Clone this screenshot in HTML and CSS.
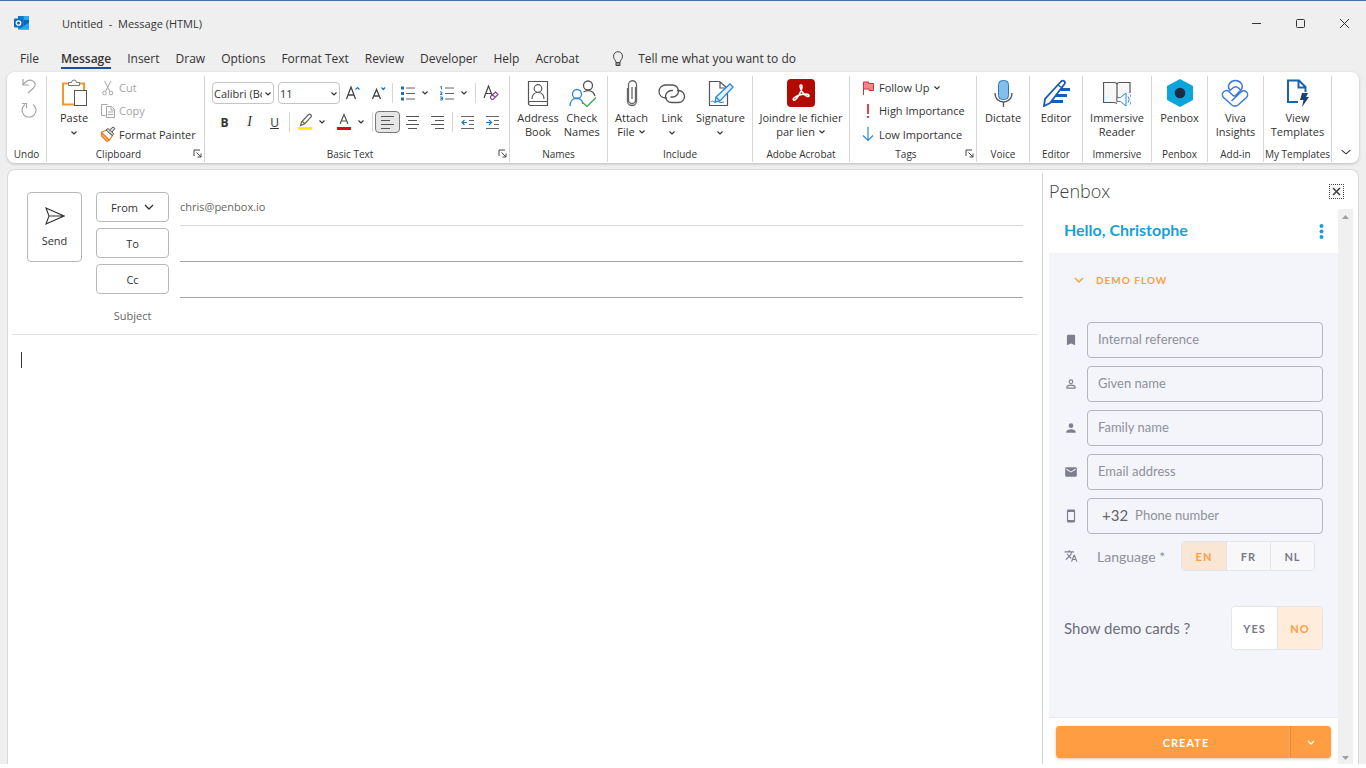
FILE: index.html
```html
<!DOCTYPE html>
<html lang="en">
<head>
    <meta charset="UTF-8">
    <meta name="viewport" content="width=device-width, initial-scale=1.0">
    <title>Untitled - Message (HTML)</title>
    <link rel="stylesheet" href="styles.css">
</head>
<body>
    <svg class="sprite" aria-hidden="true">
        <symbol id="chev" viewBox="0 0 8 8"><path d="M1.5 2.5 4 5l2.5-2.5" fill="none" stroke="currentColor" stroke-width="1.2"/></symbol>
        <symbol id="launcher" viewBox="0 0 9 9"><path d="M1 7V1h6M3.500 3.500 8 8M8 4.500V8H4.500" fill="none" stroke="#444"/></symbol>
    </svg>

    <div class="window">
        <header class="titlebar">
            <svg class="logo" width="16" height="16" viewBox="0 0 16 16">
                <path d="M4 1h11v13.500H4z" fill="#1490df"/>
                <path d="M9.500 1H15v4H9.500z" fill="#32a9e8"/>
                <path d="M4 1h5.500v4H4z" fill="#0f78d4"/>
                <path d="M9.500 5H15v4l-5.500 3z" fill="#1066b5"/>
                <path d="M15 7.500v7H5z" fill="#28a8ea"/>
                <rect x="0" y="3.500" width="9" height="9" rx="1" fill="#0f6cbd"/>
                <circle cx="4.500" cy="8" r="2.200" fill="none" stroke="#fff" stroke-width="1.300"/>
            </svg>
            <span class="window-title">Untitled&nbsp; -&nbsp; Message (HTML)</span>
            <div class="window-buttons">
                <button aria-label="Minimize"><svg width="11" height="11"><path d="M1 5.500h9" stroke="#333"/></svg></button>
                <button aria-label="Maximize"><svg width="11" height="11"><rect x="1.500" y="1.500" width="8" height="8" rx="1" fill="none" stroke="#333"/></svg></button>
                <button aria-label="Close"><svg width="11" height="11"><path d="m1 1 9 9M10 1l-9 9" stroke="#333"/></svg></button>
            </div>
        </header>

        <nav class="tabs">
            <a href="#" class="file">File</a>
            <a href="#" class="active">Message</a>
            <a href="#">Insert</a>
            <a href="#">Draw</a>
            <a href="#">Options</a>
            <a href="#">Format Text</a>
            <a href="#">Review</a>
            <a href="#">Developer</a>
            <a href="#">Help</a>
            <a href="#">Acrobat</a>
            <a href="#" class="tell">
                <svg width="12" height="16" viewBox="0 0 12 16" fill="none" stroke="#444"><path d="M4 11.500C4 9 1.500 8.500 1.500 5.200a4.500 4.500 0 0 1 9 0C10.500 8.500 8 9 8 11.500zM4 11.500v3h4v-3M4 13h4"/></svg>
                Tell me what you want to do
            </a>
        </nav>

        <section class="ribbon">
            <div class="group">
                <div class="group-body undo">
                    <button aria-label="Undo"><svg width="16" height="16" viewBox="0 0 16 16" fill="none" stroke="#a6a6a6" stroke-width="1.200"><path d="M2 1v6h6M2 7C5 3 8 1.500 11 2.500c4 1.500 4 5 1.500 7.500L7 15"/></svg></button>
                    <button aria-label="Redo"><svg width="16" height="16" viewBox="0 0 16 16" fill="none" stroke="#a6a6a6" stroke-width="1.200"><path d="M4 2.500a7 7 0 1 0 8 0M1 1.500h4.500V6"/></svg></button>
                </div>
                <div class="group-label">Undo</div>
            </div>

            <div class="group with-launcher">
                <div class="group-body clipboard">
                    <button class="big">
                        <svg width="28" height="28" viewBox="0 0 28 28" fill="none">
                            <path d="M8 4.500H3v21h11M20 4.500h4V11" stroke="#f09a2e" stroke-width="2"/>
                            <path d="M8.500 6.500v-3h3a2.500 2.500 0 0 1 5 0h3v3z" fill="#fff" stroke="#777"/>
                            <rect x="14.500" y="11.500" width="12" height="15" fill="#fff" stroke="#555"/>
                        </svg>
                        Paste
                        <svg class="chev"><use href="#chev"/></svg>
                    </button>
                    <div class="stack">
                        <button class="small off"><svg width="16" height="16" viewBox="0 0 16 16" fill="none" stroke="#a6a6a6"><path d="M4.500 1 10 11.500M11 1 5.500 11.500"/><circle cx="4.500" cy="13" r="1.800"/><circle cx="11" cy="13" r="1.800"/></svg>Cut</button>
                        <button class="small off"><svg width="16" height="16" viewBox="0 0 16 16" fill="#fff" stroke="#a6a6a6"><path d="M5.500 12.500h-4v-11h6"/><path d="M6.500 3.500h5l3 3v8h-8zM11 4v3h3.500M8 9h5M8 11.500h5"/></svg>Copy</button>
                        <button class="small"><svg width="16" height="16" viewBox="0 0 16 16"><path d="m1.500 6.500 8 7.500-2.500 1.500L1.500 10z" fill="#f7b679" stroke="#e8812a" stroke-width="1.200"/><path d="m1.500 6.500 5-2.500 6 5.500-3 4.500z" fill="#fff" stroke="#e8812a" stroke-width="1.200"/><path d="m6 4 2-1.500 5.500 5-1 2zM9.500 4 13 1l2 1.500-3 3.500" fill="#ddd" stroke="#555"/></svg>Format Painter</button>
                    </div>
                </div>
                <div class="group-label">Clipboard</div>
                <button class="launcher" aria-label="Clipboard settings"><svg width="9" height="9"><use href="#launcher"/></svg></button>
            </div>

            <div class="group with-launcher">
                <div class="group-body text-tools">
                    <div class="tool-row">
                        <div class="combo">
                            <select aria-label="Font"><option>Calibri (Body)</option></select>
                            <svg class="chev"><use href="#chev"/></svg>
                        </div>
                        <div class="combo">
                            <select aria-label="Font size"><option>11</option></select>
                            <svg class="chev"><use href="#chev"/></svg>
                        </div>
                        <button class="tool" aria-label="Grow font"><svg width="16" height="16" viewBox="0 0 16 16" fill="none" stroke="#444"><path d="M1.500 14 6 2l4.500 12M3 10h6" stroke-width="1.300"/><path d="m10.500 4.500 2-2 2 2" stroke="#1a78c2" stroke-width="1.200"/></svg></button>
                        <button class="tool" aria-label="Shrink font"><svg width="16" height="16" viewBox="0 0 16 16" fill="none" stroke="#444"><path d="M2.500 14 6.500 4.500l4 9.500M4 11h5" stroke-width="1.300"/><path d="m11.500 2.500 1.800 2 1.800-2" stroke="#1a78c2" stroke-width="1.200"/></svg></button>
                        <i class="sep"></i>
                        <button class="tool" aria-label="Bullets"><svg width="16" height="16" viewBox="0 0 16 16"><path d="M6 3h9M6 8.500h9M6 14h9" stroke="#666"/><path d="M1 1.500h3v3H1zM1 7h3v3H1zM1 12.500h3v3H1z" fill="#1a6fc0"/></svg></button>
                        <button class="drop" aria-label="Bullet styles"><svg class="chev"><use href="#chev"/></svg></button>
                        <button class="tool" aria-label="Numbering"><svg width="16" height="16" viewBox="0 0 16 16" fill="none"><path d="M6 3h9M6 8.500h9M6 14h9" stroke="#666"/><path d="M1 2l1.500-.5v3M1 7h2v1.200L1 9.500h2.500M1 12h2.500v3H1M1.500 13.500h2" stroke="#1a6fc0" stroke-width=".9"/></svg></button>
                        <button class="drop" aria-label="Numbering styles"><svg class="chev"><use href="#chev"/></svg></button>
                        <i class="sep"></i>
                        <button class="tool" aria-label="Clear formatting"><svg width="16" height="16" viewBox="0 0 16 16" fill="none"><path d="m1 13 4.500-12 3.500 9M3 8.500h5" stroke="#444" stroke-width="1.200"/><path d="m7.500 11.500 5-4.500 2.500 2.500-5 5H9l-1.500-1.500zM9.500 9.700l2.800 2.800" stroke="#8a3fa8" stroke-width="1.200"/></svg></button>
                    </div>
                    <div class="tool-row second">
                        <button class="tool"><b>B</b></button>
                        <button class="tool"><em>I</em></button>
                        <button class="tool"><u>U</u></button>
                        <i class="sep"></i>
                        <button class="tool" aria-label="Highlight"><svg width="16" height="18" viewBox="0 0 16 18"><path d="m4.500 9 7-7.500a1.800 1.800 0 0 1 2.500 2.500L7.500 11l-4 1.500zM5 8l3 3" fill="none" stroke="#666" stroke-width="1.200"/><path d="M1 14h14v3H1z" fill="#ffef00"/></svg></button>
                        <button class="drop" aria-label="Highlight colours"><svg class="chev"><use href="#chev"/></svg></button>
                        <button class="tool" aria-label="Font colour"><svg width="16" height="18" viewBox="0 0 16 18"><path d="m4 11 4-9.500L12 11M5.500 8h5" fill="none" stroke="#555" stroke-width="1.200"/><path d="M1 14h14v3H1z" fill="#e00b0b"/></svg></button>
                        <button class="drop" aria-label="Font colours"><svg class="chev"><use href="#chev"/></svg></button>
                        <i class="sep"></i>
                        <button class="tool pressed" aria-label="Align left"><svg width="14" height="14"><path d="M0 1.500h13M0 5.500h9M0 9.500h13M0 13.500h9" stroke="#555"/></svg></button>
                        <button class="tool" aria-label="Align centre"><svg width="14" height="14"><path d="M0 1.500h13M2 5.500h9M0 9.500h13M2 13.500h9" stroke="#555"/></svg></button>
                        <button class="tool" aria-label="Align right"><svg width="14" height="14"><path d="M0 1.500h13M4 5.500h9M0 9.500h13M4 13.500h9" stroke="#555"/></svg></button>
                        <i class="sep"></i>
                        <button class="tool" aria-label="Decrease indent"><svg width="14" height="14" fill="none"><path d="M0 1.500h13M8 5.500h5M8 9.500h5M0 13.500h13" stroke="#666"/><path d="M6 7.500H1M3.500 5 1 7.500 3.500 10" stroke="#1a78c2" stroke-width="1.200"/></svg></button>
                        <button class="tool" aria-label="Increase indent"><svg width="14" height="14" fill="none"><path d="M0 1.500h13M8 5.500h5M8 9.500h5M0 13.500h13" stroke="#666"/><path d="M0 7.500h5.500M3 5l2.500 2.500L3 10" stroke="#1a78c2" stroke-width="1.200"/></svg></button>
                    </div>
                </div>
                <div class="group-label">Basic Text</div>
                <button class="launcher" aria-label="Text settings"><svg width="9" height="9"><use href="#launcher"/></svg></button>
            </div>

            <div class="group">
                <div class="group-body">
                    <button class="big">
                        <svg width="28" height="28" viewBox="0 0 28 28" fill="none" stroke="#555" stroke-width="1.200"><path d="M4.500 2.500h19v24h-17a2 2 0 0 1-2-2zM4.500 24.500a2 2 0 0 1 2-2h17"/><circle cx="14" cy="9.500" r="3.800"/><path d="M8 20c0-4 2.500-6.500 6-6.500s6 2.500 6 6.500"/></svg>
                        Address<br>Book
                    </button>
                    <button class="big">
                        <svg width="28" height="28" viewBox="0 0 28 28" fill="none" stroke-width="1.300"><g stroke="#555"><circle cx="20" cy="6.500" r="4.500"/><path d="M15.500 13c5-3 10-1 11.500 4"/></g><g stroke="#2b88d8"><circle cx="9" cy="15" r="4.500"/><path d="M2 27c0-10 12-10 13-2"/></g><path d="m14 23 5 4.500 9-9" stroke="#3aa655"/></svg>
                        Check<br>Names
                    </button>
                </div>
                <div class="group-label">Names</div>
            </div>

            <div class="group">
                <div class="group-body include">
                    <button class="big">
                        <svg width="28" height="28" viewBox="0 0 28 28" fill="none" stroke="#666" stroke-width="1.300"><path d="M17.500 8v13a3.500 3.500 0 0 1-7 0V6a4 4 0 0 1 8-.5V22a4.500 4.500 0 0 1-9 0V9M14 8v12"/></svg>
                        Attach<span>File <svg class="chev"><use href="#chev"/></svg></span>
                    </button>
                    <button class="big">
                        <svg width="28" height="28" viewBox="0 0 28 28" fill="none" stroke="#555" stroke-width="1.300"><path d="M9 19H7.500A5.500 5.500 0 0 1 7.500 6h7a6 6 0 0 1 0 12h-2"/><path d="M19 11.500h1.500a5.500 5.500 0 0 1 0 12h-7a6 6 0 0 1 0-12H15"/></svg>
                        Link<svg class="chev"><use href="#chev"/></svg>
                    </button>
                    <button class="big">
                        <svg width="28" height="28" viewBox="0 0 28 28" fill="none"><path d="M13.500 2.500h-10v24h18V14M13.500 2.500l7 6M14 2.500V9h6" stroke="#555" stroke-width="1.200"/><path d="m10 18 14-13 3 3-13 14-5 1zM10 18l4 4" fill="#e1f1fc" stroke="#2b88d8" stroke-width="1.300"/><path d="M5 23c2-3 3 2 5 0s3 2 8 0" stroke="#2b88d8"/></svg>
                        Signature<svg class="chev"><use href="#chev"/></svg>
                    </button>
                </div>
                <div class="group-label">Include</div>
            </div>

            <div class="group">
                <div class="group-body">
                    <button class="big">
                        <svg width="28" height="28" viewBox="0 0 28 28"><rect width="28" height="28" rx="4" fill="#b30b00"/><path d="M13.500 6c2.500-.5 1.500 4-.5 8-2 4.500-5 8-6.500 7-1.500-1.500 3-4.500 8-5.500s8 0 7.500 1.500c-.8 1.500-4-.5-6-3-2.500-3-3.500-7.500-2.500-8z" fill="none" stroke="#fff" stroke-width="1.600"/></svg>
                        Joindre le fichier<span>par lien <svg class="chev"><use href="#chev"/></svg></span>
                    </button>
                </div>
                <div class="group-label">Adobe Acrobat</div>
            </div>

            <div class="group with-launcher">
                <div class="group-body tags">
                    <div class="stack">
                        <button class="small"><svg width="16" height="16" viewBox="0 0 16 16"><path d="M3.500 15V2h5v1.500h5v7H9V9H4" fill="#f4858e" stroke="#d13438"/></svg>Follow Up <svg class="chev"><use href="#chev"/></svg></button>
                        <button class="small"><svg width="16" height="16" viewBox="0 0 16 16"><path d="M8 1v10M8 13v2" stroke="#e81123" stroke-width="1.600"/></svg>High Importance</button>
                        <button class="small"><svg width="16" height="16" viewBox="0 0 16 16"><path d="M8 1v13M3 9.500l5 5 5-5" fill="none" stroke="#2b88d8" stroke-width="1.200"/></svg>Low Importance</button>
                    </div>
                </div>
                <div class="group-label">Tags</div>
                <button class="launcher" aria-label="Tag settings"><svg width="9" height="9"><use href="#launcher"/></svg></button>
            </div>

            <div class="group">
                <div class="group-body">
                    <button class="big">
                        <svg width="28" height="28" viewBox="0 0 28 28" fill="none"><rect x="9.500" y="1.500" width="10" height="19" rx="4" fill="#83beec" stroke="#2b78c2"/><path d="M6 14c0 12 17 12 17 0M14.500 23v5" stroke="#555" stroke-width="1.300"/></svg>
                        Dictate
                    </button>
                </div>
                <div class="group-label">Voice</div>
            </div>

            <div class="group">
                <div class="group-body">
                    <button class="big">
                        <svg width="28" height="28" viewBox="0 0 28 28" fill="none"><path d="M14 10.500h14M11 16.500h14M9 22.500h12" stroke="#185abd" stroke-width="3.200"/><path d="M19 2.500c2-2 5 0 3.500 2.500L8 24l-6 3 1-7z" fill="#fff" stroke="#185abd" stroke-width="1.800"/><path d="m16 6 4 3" stroke="#185abd" stroke-width="1.500"/></svg>
                        Editor
                    </button>
                </div>
                <div class="group-label">Editor</div>
            </div>

            <div class="group">
                <div class="group-body">
                    <button class="big">
                        <svg width="28" height="28" viewBox="0 0 28 28" fill="none"><path d="M14 24.500c-1-1-2-1-4-1H.5v-20H11c2 0 3 .5 3 2 0-1.500 1-2 3-2h10V14M14 5.500v17" fill="#f7f7f7" stroke="#555" stroke-width="1.200"/><path d="M14 18.500h3.500L23 14v13l-5.500-4.500H14z" fill="#fff" stroke="#2b88d8"/><path d="M25 17.500c1.500 2 1.500 4 0 6M27 15.500c2 3 2 7 0 10" stroke="#2b88d8"/></svg>
                        Immersive<br>Reader
                    </button>
                </div>
                <div class="group-label">Immersive</div>
            </div>

            <div class="group">
                <div class="group-body">
                    <button class="big">
                        <svg width="28" height="28" viewBox="0 0 28 28"><path d="m14 0 13 7v14l-13 7-13-7V7z" fill="#0ba5db"/><circle cx="14" cy="14" r="5.300" fill="#1c2b3f"/></svg>
                        Penbox
                    </button>
                </div>
                <div class="group-label">Penbox</div>
            </div>

            <div class="group">
                <div class="group-body">
                    <button class="big">
                        <svg width="28" height="28" viewBox="0 0 28 28" fill="none" stroke="#3b78e7" stroke-width="1.500"><path d="M9 11.500C5 6 10 1.500 14.500 1.500S23.500 6 20 11l-5.500 5.500c-1 1-2 .5-3-.5l-3.500-3.500c-2-1.500-4-1-5.500.500s-1.500 4 0 5.500l8.500 7.500c2 1.500 4 1.500 6 0l8.500-7.500c1.500-1.500 1.500-4 0-5.500s-3.500-1.500-5.500 0L10.500 22M9 11.500l3.500-3c1.500-1 3.500-1 5 .5l2.500 2.500"/></svg>
                        Viva<br>Insights
                    </button>
                </div>
                <div class="group-label">Add-in</div>
            </div>

            <div class="group">
                <div class="group-body">
                    <button class="big">
                        <svg width="28" height="28" viewBox="0 0 28 28" fill="none"><path d="M15 23H5V1.500h11l6.500 6.500v5M15.500 2v6.500H22" stroke="#1664b0" stroke-width="2"/><path d="m19 14h6l-2 4h3l-7 10 1.500-7H17z" fill="#1b3f7a"/></svg>
                        View<br>Templates
                    </button>
                </div>
                <div class="group-label">My Templates</div>
            </div>

            <button class="collapse" aria-label="Collapse ribbon"><svg width="10" height="10" viewBox="0 0 8 8"><path d="m.5 2.500 3.500 3 3.500-3" fill="none" stroke="#333" stroke-width=".9"/></svg></button>
        </section>

        <main class="workspace">
            <section class="mail">
                <form class="envelope">
                    <button type="button" class="send">
                        <svg width="20" height="18" viewBox="0 0 20 18" fill="none" stroke="#333" stroke-width="1.100"><path d="M1 1l18 8L1 17l3-8zM4 9h15"/></svg>
                        Send
                    </button>
                    <div class="fields">
                        <div class="row from">
                            <button type="button">From <svg width="10" height="10"><path d="m1 3 4 4 4-4" fill="none" stroke="#333" stroke-width="1.300"/></svg></button>
                            <input type="text" value="chris@penbox.io" aria-label="From">
                        </div>
                        <div class="row">
                            <button type="button">To</button>
                            <input type="text" aria-label="To">
                        </div>
                        <div class="row">
                            <button type="button">Cc</button>
                            <input type="text" aria-label="Cc">
                        </div>
                        <div class="row subject">
                            <label for="subject">Subject</label>
                            <input type="text" id="subject">
                        </div>
                    </div>
                </form>
                <div class="message" contenteditable="true" aria-label="Message body"><span class="caret"></span></div>
            </section>

            <aside class="pane">
                <div class="pane-head">
                    <h2>Penbox</h2>
                    <button aria-label="Close pane"><svg width="9" height="9"><path d="m1 1 7 7M8 1 1 8" stroke="#444" stroke-width="1.600"/></svg></button>
                </div>
                <div class="pane-frame">
                    <div class="addin">
                        <div class="hello">
                            <h1>Hello, Christophe</h1>
                            <button aria-label="Menu"><svg width="5" height="15" fill="#1a9fd6"><circle cx="2.500" cy="2" r="2"/><circle cx="2.500" cy="7.500" r="2"/><circle cx="2.500" cy="13" r="2"/></svg></button>
                        </div>
                        <div class="flow">
                            <button class="flow-title"><svg width="10" height="8"><path d="m1 2 4 4 4-4" fill="none" stroke="#ff9d42" stroke-width="1.500"/></svg>DEMO FLOW</button>
                            <div class="field">
                                <svg viewBox="0 0 24 24"><path d="M17 3H7a2 2 0 0 0-2 2v16l7-3 7 3V5a2 2 0 0 0-2-2z"/></svg>
                                <input type="text" placeholder="Internal reference" aria-label="Internal reference">
                            </div>
                            <div class="field">
                                <svg viewBox="0 0 24 24"><path d="M12 13c-2.670 0-8 1.340-8 4v3h16v-3c0-2.660-5.330-4-8-4m0-9a4 4 0 1 0 0 8 4 4 0 0 0 0-8m0 10.900c2.970 0 6.100 1.460 6.100 2.100v1.100H5.900V17c0-.64 3.130-2.100 6.100-2.100m0-9a2.100 2.100 0 1 1 0 4.200 2.100 2.100 0 0 1 0-4.200"/></svg>
                                <input type="text" placeholder="Given name" aria-label="Given name">
                            </div>
                            <div class="field">
                                <svg viewBox="0 0 24 24"><path d="M12 4a4 4 0 1 1 0 8 4 4 0 0 1 0-8m0 10c4.420 0 8 1.790 8 4v2H4v-2c0-2.210 3.580-4 8-4"/></svg>
                                <input type="text" placeholder="Family name" aria-label="Family name">
                            </div>
                            <div class="field">
                                <svg viewBox="0 0 24 24"><path d="m20 8-8 5-8-5V6l8 5 8-5m0-2H4a2 2 0 0 0-2 2v12a2 2 0 0 0 2 2h16a2 2 0 0 0 2-2V6a2 2 0 0 0-2-2"/></svg>
                                <input type="text" placeholder="Email address" aria-label="Email address">
                            </div>
                            <div class="field">
                                <svg viewBox="0 0 24 24"><path d="M17 19H7V5h10m0-4H7a2 2 0 0 0-2 2v18a2 2 0 0 0 2 2h10a2 2 0 0 0 2-2V3a2 2 0 0 0-2-2"/></svg>
                                <div class="phone"><span>+32</span><input type="tel" placeholder="Phone number" aria-label="Phone number"></div>
                            </div>
                            <div class="field language">
                                <svg viewBox="0 0 24 24"><path d="m12.870 15.070-2.540-2.510.03-.03A17.500 17.500 0 0 0 14.070 6H17V4h-7V2H8v2H1v2h11.170C11.500 7.920 10.440 9.750 9 11.350 8.070 10.320 7.300 9.190 6.690 8h-2c.73 1.630 1.730 3.170 2.980 4.560l-5.090 5.020L4 19l5-5 3.110 3.110zM18.500 10h-2L12 22h2l1.120-3h4.750L21 22h2zm-2.620 7 1.620-4.330L19.120 17z"/></svg>
                                <span>Language *</span>
                                <div class="toggle">
                                    <button class="on" aria-pressed="true">EN</button>
                                    <button>FR</button>
                                    <button>NL</button>
                                </div>
                            </div>
                            <div class="cards">
                                <span>Show demo cards ?</span>
                                <div class="toggle large">
                                    <button>YES</button>
                                    <button class="on" aria-pressed="true">NO</button>
                                </div>
                            </div>
                        </div>
                        <div class="actions">
                            <button class="create">CREATE</button>
                            <button class="more" aria-label="More actions"><svg width="8" height="8"><path d="m1 2 3 3 3-3" fill="none" stroke="#fff" stroke-width="1.300"/></svg></button>
                        </div>
                    </div>
                    <div class="scrollbar" aria-hidden="true">
                        <svg width="7" height="4"><path d="M0 4h7L3.500 0z" fill="#a0a0a0"/></svg>
                        <svg width="7" height="4"><path d="M0 0h7L3.500 4z" fill="#a0a0a0"/></svg>
                    </div>
                </div>
            </aside>
        </main>
    </div>
</body>
</html>
```
FILE: styles.css
```css
* {
    box-sizing: border-box;
}
body {
    margin: 0;
    font-family: "Open Sans", "Noto Sans", sans-serif;
    font-size: 11px;
    color: #333;
    background: #fff;
}
button, input, select {
    font: inherit;
    color: inherit;
    border: none;
    background: none;
    padding: 0;
    margin: 0;
}
button {
    cursor: pointer;
}
svg {
    flex: none;
}
.sprite {
    position: absolute;
    width: 0;
    height: 0;
}
.chev {
    width: 8px;
    height: 8px;
}

.window {
    display: flex;
    flex-direction: column;
    min-height: 100vh;
    background: #efefef;
    border-top: 1px solid #4a6fa8;
    border-bottom: 4px solid #fff;
}

/* title bar and tabs */
.titlebar {
    display: flex;
    align-items: center;
    height: 44px;
    padding-left: 14px;
}
.window-title {
    margin-left: 32px;
}
.window-buttons {
    display: flex;
    margin-left: auto;
}
.window-buttons button {
    display: grid;
    place-items: center;
    width: 44px;
    height: 32px;
}
.tabs {
    display: flex;
    gap: 16px;
    height: 27px;
    padding-left: 20px;
    font-size: 12px;
    line-height: 28px;
}
.tabs a {
    color: #333;
    text-decoration: none;
    height: 24px;
    white-space: nowrap;
}
.tabs .file {
    margin-right: 6px;
}
.tabs .active {
    font-weight: 600;
    border-bottom: 2px solid #1f4e9e;
}
.tabs .tell {
    display: flex;
    align-items: center;
    gap: 14px;
    height: 28px;
    margin-left: 17px;
}

/* ribbon */
.ribbon {
    display: grid;
    grid-template-columns: 40px 158px 305px 98px 145px 97px 127px 53px 53px 69px 56px 56px 68px 1fr;
    margin: 0 7px;
    height: 91px;
    background: #fff;
    border-radius: 8px;
    box-shadow: 0 1px 3px #bbb;
}
.group {
    position: relative;
    display: flex;
    flex-direction: column;
    margin: 4px 0;
    border-right: 1px solid #d6d6d6;
    white-space: nowrap;
}
.group-body {
    display: flex;
    justify-content: center;
    gap: 5px;
    height: 70px;
}
.group-label {
    font-size: 10px;
    line-height: 16px;
    text-align: center;
}
.with-launcher .group-label {
    padding-right: 14px;
}
.launcher {
    position: absolute;
    right: 2px;
    bottom: 4px;
    height: 9px;
    line-height: 0;
}
.big {
    display: flex;
    flex-direction: column;
    align-items: center;
    line-height: 14px;
    text-align: center;
    padding-top: 3px;
}
.big > svg:first-child {
    margin-bottom: 4px;
}
.big > .chev {
    margin-top: 4px;
}
.undo {
    flex-direction: column;
    align-items: center;
    justify-content: flex-start;
    gap: 8px;
    padding: 2px 0 0 4px;
}
.undo button {
    height: 16px;
}
.clipboard {
    justify-content: flex-start;
    gap: 12px;
    padding-left: 13px;
}
.stack {
    display: flex;
    flex-direction: column;
}
.small {
    display: flex;
    align-items: center;
    gap: 3px;
    height: 24px;
}
.off {
    color: #a6a6a6;
}
.tags {
    justify-content: flex-start;
    padding-left: 10px;
}
.include {
    gap: 10px;
}
.collapse {
    align-self: end;
    justify-self: center;
    padding-bottom: 6px;
}

.text-tools {
    flex-direction: column;
    justify-content: flex-start;
    gap: 5px;
    padding: 5px 0 0 7px;
}
.tool-row {
    display: flex;
    align-items: center;
    height: 24px;
}
.combo {
    position: relative;
    width: 62px;
    margin-right: 4px;
}
.combo + .tool {
    margin-left: -4px;
}
.combo select {
    appearance: none;
    width: 100%;
    height: 22px;
    padding: 0 11px 0 1px;
    border: 1px solid #c4c4c4;
    border-radius: 4px;
    overflow: hidden;
}
.combo .chev {
    position: absolute;
    right: 2px;
    top: 8px;
}
.tool {
    display: grid;
    place-items: center;
    width: 25px;
    height: 22px;
    font-size: 12px;
}
.tool em {
    font-family: "Liberation Serif", serif;
    font-size: 14px;
}
.drop {
    display: grid;
    place-items: center;
    width: 10px;
    height: 22px;
    margin-right: 4px;
}
.pressed {
    background: #e6e6e6;
    border: 1px solid #777;
    border-radius: 4px;
}
.sep {
    width: 1px;
    height: 20px;
    margin: 0 2px;
    background: #d6d6d6;
}

/* message */
.workspace {
    flex: 1;
    display: grid;
    grid-template-columns: 1fr 316px;
    margin: 6px 7px 0;
    background: #fff;
    border: 1px solid #d9d9d9;
    border-bottom: none;
    border-radius: 8px 8px 0 0;
}
.mail {
    display: flex;
    flex-direction: column;
    padding: 20px 4px 0;
}
.envelope {
    display: flex;
    gap: 14px;
    padding: 0 15px;
    border-bottom: 1px solid #e2e2e2;
}
.send, .row button {
    border: 1px solid #b8b8b8;
    border-radius: 4px;
}
.send {
    display: flex;
    flex-direction: column;
    align-items: center;
    justify-content: center;
    gap: 8px;
    width: 55px;
    height: 70px;
    margin-top: 2px;
}
.fields {
    flex: 1;
}
.row {
    display: grid;
    grid-template-columns: 73px 1fr;
    column-gap: 11px;
    height: 36px;
}
.row button, .row label {
    display: flex;
    align-items: center;
    justify-content: center;
    gap: 6px;
    height: 30px;
    margin-top: 2px;
}
.row input {
    height: 36px;
    padding-bottom: 3px;
    border-bottom: 1px solid #a6a6a6;
    outline: none;
}
.row.from input {
    color: #666;
    border-color: #d9d9d9;
}
.row.subject {
    color: #666;
}
.row.subject input {
    border: none;
}
.message {
    flex: 1;
    padding: 17px 9px;
    outline: none;
}
.caret {
    display: block;
    width: 1px;
    height: 16px;
    background: #333;
}

/* add-in pane */
.pane {
    display: flex;
    flex-direction: column;
    margin-top: 3px;
    padding: 0 5px 0 6px;
    border-left: 1px solid #d4d4d4;
}
.pane-head {
    display: flex;
    align-items: center;
    justify-content: space-between;
    height: 36px;
    padding-right: 9px;
}
.pane-head h2 {
    margin: 0;
    font-size: 18px;
    font-weight: 300;
    color: #444;
}
.pane-head button {
    display: grid;
    place-items: center;
    width: 15px;
    height: 15px;
    border: 1px dotted #444;
}
.pane-frame {
    flex: 1;
    display: grid;
    grid-template-columns: 1fr 15px;
    font-family: Lato, sans-serif;
    font-size: 13px;
}
.addin {
    display: flex;
    flex-direction: column;
}
.hello {
    display: flex;
    align-items: center;
    justify-content: space-between;
    height: 44px;
    padding: 0 14px 0 15px;
    color: #1a9fd6;
}
.hello h1 {
    margin: 0;
    padding-bottom: 3px;
    font-size: 16px;
    font-weight: 700;
}
.hello button {
    display: grid;
}
.flow {
    flex: 1;
    display: flex;
    flex-direction: column;
    gap: 8px;
    padding: 17px 15px;
    background: #f4f5fa;
    border-bottom: 1px solid #e8eaf0;
}
.flow-title {
    display: flex;
    align-items: center;
    gap: 12px;
    height: 20px;
    margin-bottom: 24px;
    padding-left: 10px;
    font-size: 10px;
    font-weight: 700;
    letter-spacing: 1px;
    color: #ff9d42;
}
.field {
    display: grid;
    grid-template-columns: 14px 1fr;
    gap: 9px;
    align-items: center;
}
.field > svg {
    width: 14px;
    height: 14px;
    fill: #7d7f8f;
}
.field > input, .phone {
    width: 100%;
    height: 36px;
    padding: 0 10px 2px;
    border: 1px solid #b4b6c0;
    border-radius: 4px;
}
.field input::placeholder {
    color: #8e909c;
}
.phone {
    display: flex;
    align-items: center;
    gap: 7px;
    padding-left: 14px;
}
.phone span {
    font-size: 15px;
    color: #666;
}
.phone input {
    min-width: 0;
    height: 30px;
}
.language {
    grid-template-columns: 14px 85px 1fr;
    height: 28px;
    font-size: 14px;
    color: #8e909c;
}
.language span {
    padding-left: 10px;
}
.toggle {
    display: flex;
    justify-self: start;
    border: 1px solid #e4e5ea;
    border-radius: 4px;
    overflow: hidden;
}
.toggle button {
    width: 44px;
    height: 28px;
    font-size: 11px;
    font-weight: 700;
    letter-spacing: 1px;
    color: #777986;
    background: #f8f8fa;
}
.toggle button + button {
    border-left: 1px solid #e4e5ea;
}
.toggle .on {
    color: #ff9d42;
    background: #f9e6d5;
}
.cards {
    display: flex;
    align-items: center;
    justify-content: space-between;
    margin-top: 28px;
    font-size: 15px;
    color: #6b6d7a;
}
.large button {
    width: 45px;
    height: 42px;
    background: #fff;
}
.large .on {
    background: #ffecdb;
}
.actions {
    display: flex;
    height: 46px;
    padding: 8px 7px 6px;
}
.actions button {
    color: #fff;
    background: #ff9d42;
    box-shadow: 0 1px 3px #e0c0a0;
}
.actions .create {
    flex: 1;
    padding-left: 26px;
    border-radius: 4px 0 0 4px;
    font-size: 11px;
    font-weight: 700;
    letter-spacing: 1px;
}
.actions .more {
    width: 41px;
    border-left: 1px solid #e88a30;
    border-radius: 0 4px 4px 0;
}
.scrollbar {
    display: flex;
    flex-direction: column;
    align-items: center;
    justify-content: space-between;
    padding: 6px 0 4px;
    background: #f0f0f0;
}
```
